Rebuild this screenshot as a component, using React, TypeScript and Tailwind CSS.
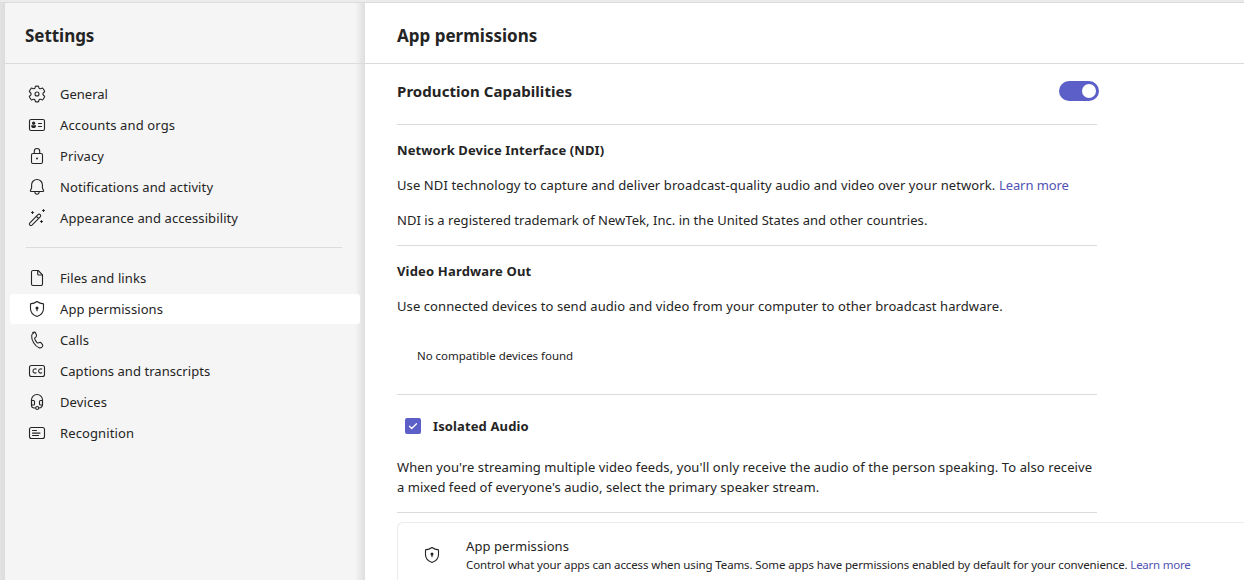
import type { ReactNode } from "react";
import clsx from "clsx";

function Icon({ children }: { children: ReactNode }) {
  return (
    <svg className="size-5 shrink-0" viewBox="0 0 20 20" fill="none" stroke="#242424" strokeWidth="1.1" strokeLinecap="round" strokeLinejoin="round">
      {children}
    </svg>
  );
}

const GearIcon = () => (
  <Icon>
    <path d="M8.4 2.3Q10 1.9 11.6 2.3L12 4Q12.4 5 13.5 4.7L15.6 4Q17.1 5.7 17.7 7.6L16.2 9Q15.4 10 16.2 11L17.7 12.4Q17.1 14.3 15.6 16L13.5 15.3Q12.4 15 12 16L11.6 17.7Q10 18.1 8.4 17.7L8 16Q7.6 15 6.5 15.3L4.4 16Q2.9 14.3 2.3 12.4L3.8 11Q4.6 10 3.8 9L2.3 7.6Q2.9 5.7 4.4 4L6.5 4.7Q7.6 5 8 4Z" />
    <circle cx="10" cy="10" r="2" />
  </Icon>
);
const ContactCardIcon = () => (
  <Icon>
    <rect x="2.5" y="4.5" width="15" height="11" rx="1.6" />
    <circle cx="6.6" cy="8.2" r="1.6" fill="#242424" stroke="none" />
    <path d="M4.2 10.2h4.8v.8c0 1.3-.9 2.1-2.4 2.1s-2.4-.8-2.4-2.1z" fill="#242424" stroke="none" />
    <path d="M11.5 8.5h3M11.5 11.5h3" />
  </Icon>
);
const LockIcon = () => (
  <Icon>
    <rect x="4.5" y="7.5" width="11" height="10" rx="1.5" />
    <path d="M7.3 7.5V5.2a2.7 2.7 0 0 1 5.4 0v2.3" />
    <circle cx="10" cy="12.5" r="1" fill="#242424" stroke="none" />
  </Icon>
);
const BellIcon = () => (
  <Icon>
    <path d="M10 2.5a5.4 5.4 0 0 0-5.4 5.2v3.1l-1.2 3c-.1.4.1.7.5.7h12.2c.4 0 .6-.3.5-.7l-1.2-3V7.7A5.4 5.4 0 0 0 10 2.5z" />
    <path d="M7.8 14.8c.1 1.5 1 2.5 2.2 2.5s2.1-1 2.2-2.5" />
  </Icon>
);
const WandIcon = () => (
  <Icon>
    <path d="M2.9 14.9L11 6.6a1.5 1.5 0 0 1 2.2 2.2L5 17.1a1.5 1.5 0 0 1-2.1-2.2zM9.4 8.3l2.1 2.2" />
    <path d="M5.5 3.5v2M4.5 4.5h2M16.5 1.5v2M15.5 2.5h2M14.5 12.5v2M13.5 13.5h2" />
  </Icon>
);
const DocumentIcon = () => (
  <Icon>
    <path d="M6 2.5h5.2l4.3 4.3V16a1.5 1.5 0 0 1-1.5 1.5H6A1.5 1.5 0 0 1 4.5 16V4A1.5 1.5 0 0 1 6 2.5z" />
    <path d="M10.7 2.7V6a1 1 0 0 0 1 1h3.6" />
  </Icon>
);
const ShieldIcon = () => (
  <Icon>
    <path d="M10 2.5c1.900 1.400 4 2.200 6.500 2.400v4.700c0 3.800-2.300 6.500-6.500 7.900-4.200-1.400-6.500-4.100-6.500-7.900V4.900C6 4.700 8.100 3.900 10 2.500z" />
    <circle cx="10" cy="9" r="1.5" fill="#242424" stroke="none" />
    <path d="M10 9.5v2.3" />
  </Icon>
);
const CallIcon = () => (
  <Icon>
    <path d="M6.3 2.7l1-.3c.9-.2 1.7.2 2 1l.7 1.6c.3.7.1 1.5-.4 2L8.400 8.100c-.2.2-.2.5-.1.8.2.8.6 1.500 1 2.200.5.8 1 1.400 1.600 2 .2.2.4.2.7.1l1.500-.5c.8-.2 1.500 0 2 .7l1 1.400c.5.7.4 1.500-.2 2.100l-.7.6c-.7.6-1.600.7-2.500.4-2.100-.7-3.900-2.300-5.500-4.900-1.600-2.700-2.200-5.200-1.900-7.400.2-1 .8-1.900 1.900-2.200z" transform="translate(-.6 -.2)" />
  </Icon>
);
const CaptionsIcon = () => (
  <Icon>
    <rect x="2.5" y="4.5" width="15" height="11" rx="2" />
    <path d="M9.1 8.1a2.1 2.1 0 1 0 0 3.7M14.700 8.100a2.100 2.100 0 1 0 0 3.700" />
  </Icon>
);
const HeadsetIcon = () => (
  <Icon>
    <path d="M4.500 12V8a5.500 5.500 0 0 1 11 0v4" />
    <path d="M4.500 8.500h2a1 1 0 0 1 1 1v2.500a1 1 0 0 1-1 1h-2zM15.500 8.500h-2a1 1 0 0 0-1 1v2.500a1 1 0 0 0 1 1h2z" />
    <path d="M4.500 12v1.500c0 1.600 1 2.500 2.700 2.500h1.300M15.500 12.500c0 2-1.300 3.300-3.600 3.500" />
    <circle cx="10.2" cy="16" r="1.5" />
  </Icon>
);
const RecognitionIcon = () => (
  <Icon>
    <rect x="2.5" y="4.5" width="15" height="11" rx="2" />
    <path d="M5.500 7.500h4M5.500 10.100h7.500M5.500 12.500h6" />
  </Icon>
);

type Item = { label: string; icon: () => ReactNode; tracking: string; active?: boolean };

const general: Item[] = [
  { label: "General", icon: GearIcon, tracking: "tracking-[0.01px]" },
  { label: "Accounts and orgs", icon: ContactCardIcon, tracking: "tracking-[0.12px]" },
  { label: "Privacy", icon: LockIcon, tracking: "tracking-[0.1px]" },
  { label: "Notifications and activity", icon: BellIcon, tracking: "tracking-[0.11px]" },
  { label: "Appearance and accessibility", icon: WandIcon, tracking: "tracking-[0.1px]" },
];

const features: Item[] = [
  { label: "Files and links", icon: DocumentIcon, tracking: "tracking-[0.08px]" },
  { label: "App permissions", icon: ShieldIcon, tracking: "tracking-[0.08px]", active: true },
  { label: "Calls", icon: CallIcon, tracking: "tracking-[0.11px]" },
  { label: "Captions and transcripts", icon: CaptionsIcon, tracking: "tracking-[0.05px]" },
  { label: "Devices", icon: HeadsetIcon, tracking: "tracking-[0.1px]" },
  { label: "Recognition", icon: RecognitionIcon, tracking: "tracking-[0.12px]" },
];

function NavList({ items }: { items: Item[] }) {
  return (
    <ul className="flex flex-col gap-px pl-[5px]">
      {items.map(({ label, icon: Glyph, tracking, active }) => (
        <li key={label} className={clsx("flex h-[30px] w-[350px] items-center gap-[13px] rounded-[3px] pl-[17px]", active && "bg-white")}>
          <Glyph />
          <span className={tracking}>{label}</span>
        </li>
      ))}
    </ul>
  );
}

function Sidebar() {
  return (
    <aside className="flex w-[360px] shrink-0 flex-col bg-[#f5f5f5] bg-[linear-gradient(to_right,transparent_350px,#dedede_360px)]">
      <header className="flex h-[61px] shrink-0 items-center border-b border-[#dbdbdb] pt-[5px] pl-5">
        <h1 className="text-[17px] font-bold tracking-[-0.04px]">Settings</h1>
      </header>
      <nav className="flex flex-col pt-[15px]">
        <NavList items={general} />
        <hr className="mt-[14px] mb-[15px] ml-[21px] w-[316px] border-[#dbdbdb]" />
        <NavList items={features} />
      </nav>
    </aside>
  );
}

const Rule = () => <hr className="w-[700px] border-[#dbdbdb]" />;

export default function App() {
  return (
    <div className="flex h-[580px] w-[1244px] flex-col overflow-hidden bg-white font-['Noto_Sans','Open_Sans',sans-serif] text-[13px] leading-5 whitespace-nowrap text-[#242424]">
      <div className="h-[3px] shrink-0 border-b border-[#dcdcdc] bg-[#ebebeb]" />
      <div className="flex min-h-0 flex-1">
        <div className="w-[5px] shrink-0 bg-[linear-gradient(to_right,#e3e3e3,#dcdcdc)]" />
        <Sidebar />
        <main className="flex min-w-0 flex-1 flex-col">
          <header className="flex h-[61px] shrink-0 items-center border-b border-[#dbdbdb] pt-[5px] pl-8">
            <h2 className="text-[17px] font-bold tracking-[0.01px]">App permissions</h2>
          </header>
          <div className="flex flex-col pl-8">
            <div className="flex h-[60px] w-[702px] items-center justify-between pb-[6px]">
              <h3 className="text-[15px] font-bold tracking-[0.07px]">Production Capabilities</h3>
              <button role="switch" aria-checked="true" aria-label="Production Capabilities" className="flex h-5 w-10 items-center justify-end rounded-full bg-[#5b5fc7] pr-[3px]">
                <span className="size-[14px] rounded-full bg-white" />
              </button>
            </div>
            <Rule />
            <section className="flex h-[120px] flex-col gap-[15px] pt-[15px]">
              <h4 className="font-bold tracking-[0.11px]">Network Device Interface (NDI)</h4>
              <p>
                <span className="tracking-[0.103px]">Use NDI technology to capture and deliver broadcast-quality audio and video over your network. </span>
                <a className="tracking-[-0.08px] text-[#4f52b2]">Learn more</a>
              </p>
              <p className="tracking-[0.035px]">NDI is a registered trademark of NewTek, Inc. in the United States and other countries.</p>
            </section>
            <Rule />
            <section className="flex h-[148px] flex-col gap-[15px] pt-[15px]">
              <h4 className="font-bold tracking-[0.17px]">Video Hardware Out</h4>
              <p className="tracking-[0.086px]">Use connected devices to send audio and video from your computer to other broadcast hardware.</p>
              <p className="pt-[15px] pl-5 text-[11.5px] tracking-[-0.03px]">No compatible devices found</p>
            </section>
            <Rule />
            <section className="flex h-[117px] flex-col gap-[21px] pt-[21px]">
              <label className="flex items-center gap-3 pl-2">
                <span className="grid size-4 place-items-center rounded-xs bg-[#5b5fc7]">
                  <svg className="size-3" viewBox="0 0 12 12" fill="none" stroke="#fff" strokeWidth="1.3" strokeLinecap="round" strokeLinejoin="round">
                    <path d="M2.5 6.2l2.2 2.3 4.8-4.800" />
                  </svg>
                </span>
                <span className="font-bold tracking-[0.12px]">Isolated Audio</span>
              </label>
              <p>
                <span className="tracking-[0.09px]">When you're streaming multiple video feeds, you'll only receive the audio of the person speaking. To also receive</span>
                <br />
                <span className="tracking-[0.045px]">a mixed feed of everyone's audio, select the primary speaker stream.</span>
              </p>
            </section>
            <Rule />
            <section className="mt-[9px] flex h-[70px] items-center gap-6 rounded-tl-md border-t border-l border-[#ebebeb] pl-6">
              <div className="pb-[6px]">
                <ShieldIcon />
              </div>
              <div className="flex h-full flex-col pt-[13px]">
                <p className="tracking-[0.08px]">App permissions</p>
                <p className="pt-px text-[11.5px] leading-4">
                  <span className="tracking-[-0.125px]">Control what your apps can access when using Teams. Some apps have permissions enabled by default for your convenience. </span>
                  <a className="tracking-[-0.25px] text-[#4f52b2]">Learn more</a>
                </p>
              </div>
            </section>
          </div>
        </main>
      </div>
    </div>
  );
}
